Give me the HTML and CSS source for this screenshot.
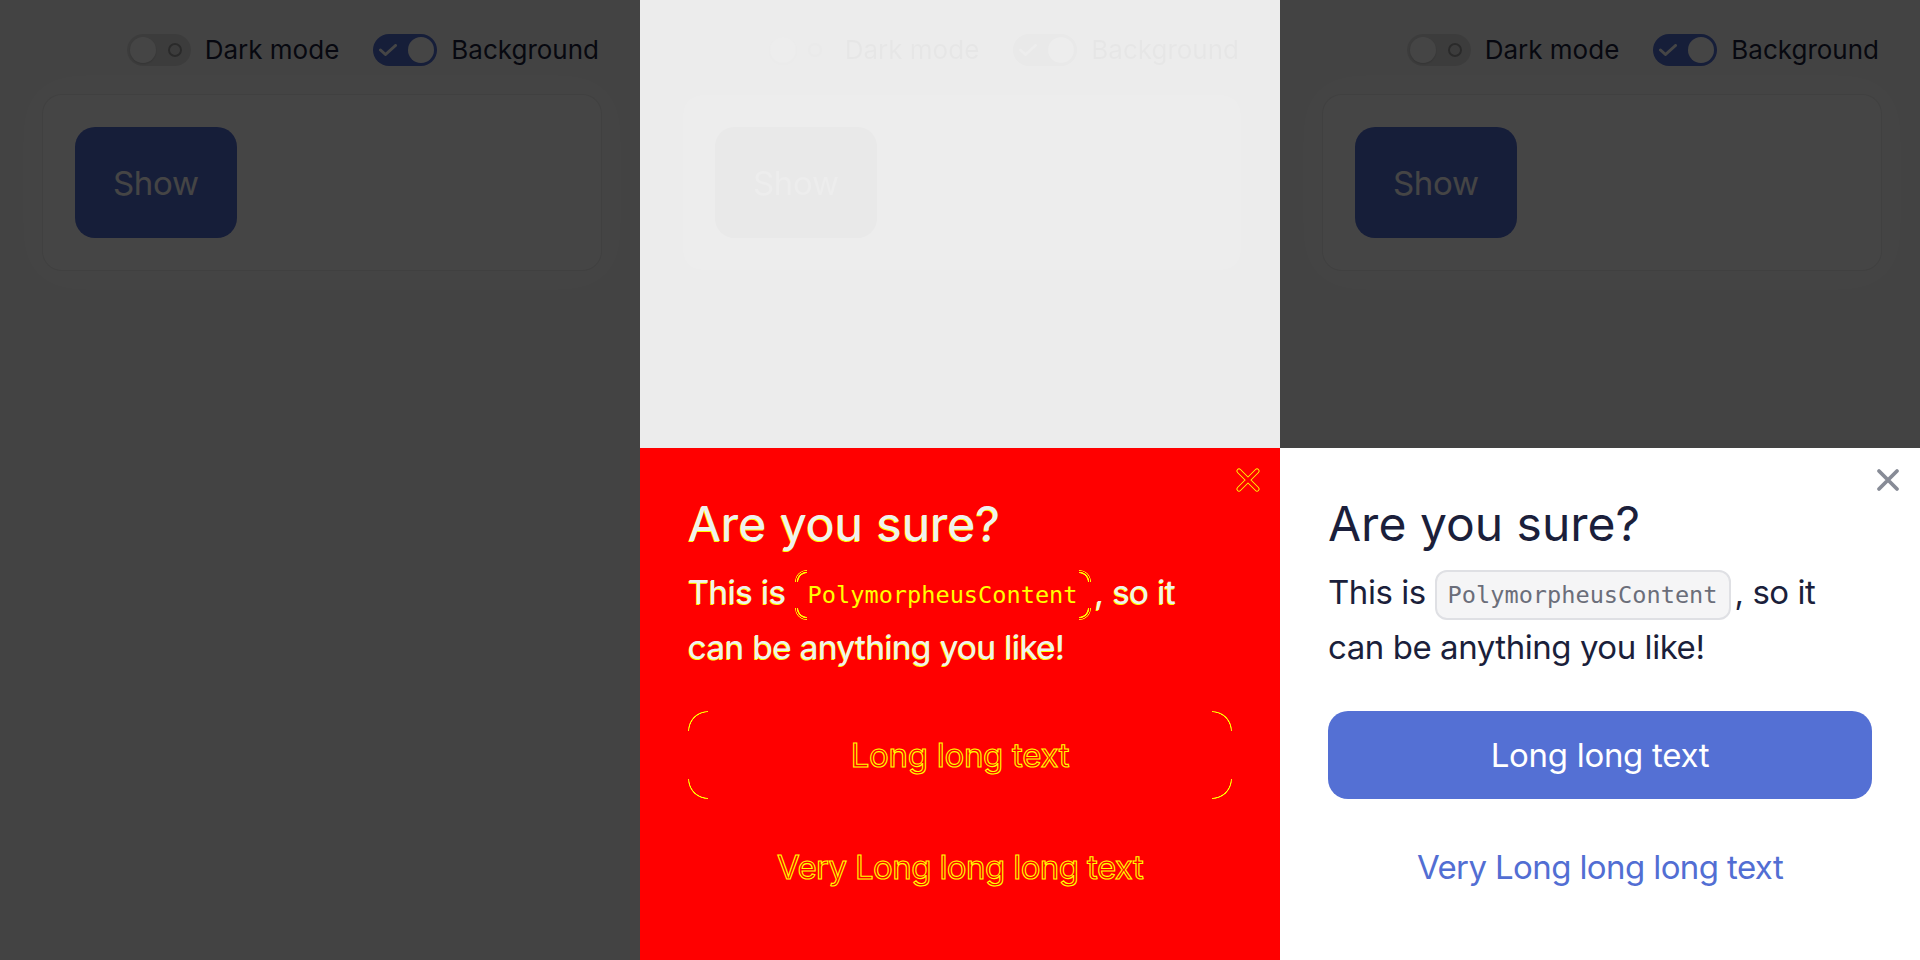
FILE: index.html
```html
<!DOCTYPE html>
<html lang="en">
<head>
<meta charset="utf-8">
<title>Dialog screenshot diff</title>
<link rel="stylesheet" href="styles.css">
</head>
<body>
<main class="panels">

  <!-- Expected -->
  <section class="panel">
    <div class="stage">
      <div class="page">
        <div class="toolbar">
          <div class="switch">
            <span class="toggle toggle--off"><span class="knob"></span><span class="ring"></span></span>
            <span class="switch-label">Dark mode</span>
          </div>
          <div class="switch">
            <span class="toggle toggle--on"><svg class="check" viewBox="0 0 18 12"><path d="M1.5 6L6.5 10.5L16.5 1.5"/></svg><span class="knob"></span></span>
            <span class="switch-label">Background</span>
          </div>
        </div>
        <div class="card"><button class="btn-show" type="button">Show</button></div>
      </div>
      <div class="scrim"></div>
    </div>
  </section>

  <!-- Diff -->
  <section class="panel panel--diff">
    <div class="stage">
      <div class="page">
        <div class="toolbar">
          <div class="switch">
            <span class="toggle toggle--off"><span class="knob"></span><span class="ring"></span></span>
            <span class="switch-label">Dark mode</span>
          </div>
          <div class="switch">
            <span class="toggle toggle--on"><svg class="check" viewBox="0 0 18 12"><path d="M1.5 6L6.5 10.5L16.5 1.5"/></svg><span class="knob"></span></span>
            <span class="switch-label">Background</span>
          </div>
        </div>
        <div class="card"><button class="btn-show" type="button">Show</button></div>
      </div>
      <div class="scrim"></div>
      <div class="fade"></div>
    </div>
    <div class="dialog dialog--diff">
      <button class="dialog-close" type="button" aria-label="Close"><svg viewBox="0 0 32 32"><path class="x-outer" d="M7 7L25 25M25 7L7 25"/><path class="x-inner" d="M7 7L25 25M25 7L7 25"/></svg></button>
      <h2 class="dialog-title">Are you sure?</h2>
      <p class="dialog-text">This is <code class="code">PolymorpheusContent</code>, so it can be anything you like!</p>
      <div class="actions">
        <button class="btn btn--primary" type="button">Long long text</button>
        <button class="btn btn--flat" type="button">Very Long long long text</button>
      </div>
    </div>
  </section>

  <!-- Actual -->
  <section class="panel">
    <div class="stage">
      <div class="page">
        <div class="toolbar">
          <div class="switch">
            <span class="toggle toggle--off"><span class="knob"></span><span class="ring"></span></span>
            <span class="switch-label">Dark mode</span>
          </div>
          <div class="switch">
            <span class="toggle toggle--on"><svg class="check" viewBox="0 0 18 12"><path d="M1.5 6L6.5 10.5L16.5 1.5"/></svg><span class="knob"></span></span>
            <span class="switch-label">Background</span>
          </div>
        </div>
        <div class="card"><button class="btn-show" type="button">Show</button></div>
      </div>
      <div class="scrim"></div>
    </div>
    <div class="dialog">
      <button class="dialog-close" type="button" aria-label="Close"><svg viewBox="0 0 32 32"><path class="x-outer" d="M7 7L25 25M25 7L7 25"/><path class="x-inner" d="M7 7L25 25M25 7L7 25"/></svg></button>
      <h2 class="dialog-title">Are you sure?</h2>
      <p class="dialog-text">This is <code class="code">PolymorpheusContent</code>, so it can be anything you like!</p>
      <div class="actions">
        <button class="btn btn--primary" type="button">Long long text</button>
        <button class="btn btn--flat" type="button">Very Long long long text</button>
      </div>
    </div>
  </section>

</main>
</body>
</html>
```

FILE: styles.css
```css
* {
  box-sizing: border-box;
  margin: 0;
  padding: 0;
}

html,
body {
  width: 1920px;
  height: 960px;
  overflow: hidden;
}

body {
  font-family: Inter, "Noto Sans", sans-serif;
  color: #1b1f3b;
  background: #434343;
}

button {
  font: inherit;
  border: 0;
  background: none;
  color: inherit;
}

.panels {
  display: grid;
  grid-template-columns: repeat(3, 640px);
  height: 960px;
}

.panel {
  display: grid;
  grid-template-rows: 960px;
  grid-template-columns: 640px;
  overflow: hidden;
}

.panel > * {
  grid-area: 1 / 1;
}

/* ---------- page under the modal ---------- */
.stage {
  display: grid;
  grid-template-rows: 100%;
  grid-template-columns: 100%;
}

.stage > * {
  grid-area: 1 / 1;
}

.page {
  background: #f7f7f7;
  padding: 34px 41px 0 42px;
}

.scrim {
  background: rgba(0, 0, 0, 0.73);
}

.toolbar {
  display: flex;
  justify-content: flex-end;
  align-items: center;
  gap: 34px;
  height: 32px;
}

.switch {
  display: flex;
  align-items: center;
  gap: 14px;
}

.switch-label {
  font-size: 26px;
  line-height: 32px;
  color: #1b1f3b;
}

.toggle {
  width: 64px;
  height: 32px;
  border-radius: 16px;
  display: flex;
  align-items: center;
  justify-content: space-between;
}

.toggle--off {
  background: #dedede;
  padding: 0 9px 0 3px;
}

.toggle--on {
  background: #526ed3;
  padding: 0 3px 0 6px;
}

.knob {
  width: 26px;
  height: 26px;
  border-radius: 50%;
  background: #fff;
}

.toggle--off .knob {
  box-shadow: 0 1px 2px rgba(0, 0, 0, 0.15);
}

.ring {
  width: 14px;
  height: 14px;
  border-radius: 50%;
  border: 2px solid #9a9a9a;
}

.check {
  width: 18px;
  height: 12px;
  fill: none;
  stroke: #fff;
  stroke-width: 3;
  stroke-linecap: round;
  stroke-linejoin: round;
}

.card {
  margin-top: 28px;
  margin-right: -3px;
  background: #fff;
  border: 1px solid rgba(0, 0, 0, 0.08);
  border-radius: 20px;
  padding: 32px;
  box-shadow: 0 0 40px 12px rgba(255, 255, 255, 0.6);
}

.btn-show {
  display: block;
  height: 111px;
  padding: 0 38px;
  border-radius: 20px;
  background: #526ed3;
  color: #fff;
  font-size: 33px;
  letter-spacing: -0.3px;
}

/* ---------- diff view ---------- */
.panel--diff .stage {
  filter: grayscale(1);
}

.fade {
  background: rgba(255, 255, 255, 0.9);
}

/* ---------- dialog ---------- */
.dialog {
  align-self: end;
  height: 512px;
  position: relative;
  background: #fff;
  padding: 48px;
}

.dialog-close {
  position: absolute;
  top: 16px;
  right: 16px;
  width: 32px;
  height: 32px;
  display: flex;
}

.dialog-close svg {
  width: 32px;
  height: 32px;
  fill: none;
  stroke-linecap: round;
}

.x-outer {
  stroke: #878b96;
  stroke-width: 3.8;
}

.x-inner {
  stroke: none;
}

.dialog-title {
  font-size: 48px;
  line-height: 56px;
  font-weight: 400;
  color: #1b1f3b;
}

.dialog-text {
  margin-top: 13px;
  font-size: 33px;
  line-height: 55px;
  letter-spacing: -0.45px;
  color: #1b1f3b;
}

.code {
  display: inline-block;
  font-family: "DejaVu Sans Mono", "Liberation Mono", monospace;
  font-size: 23.6px;
  line-height: 46px;
  letter-spacing: 0;
  padding: 0 11px;
  margin-right: 4px;
  border: 2px solid #dfe0e4;
  border-radius: 12px;
  background: #f5f5f6;
  color: #6b6e7a;
  vertical-align: 1px;
}

.actions {
  margin-top: 36px;
  display: flex;
  flex-direction: column;
  gap: 24px;
}

.btn {
  height: 88px;
  border-radius: 20px;
  font-size: 33px;
  letter-spacing: -0.3px;
  display: flex;
  align-items: center;
  justify-content: center;
}

.btn--primary {
  background: #5470d4;
  color: #fff;
}

.btn--flat {
  color: #526ed3;
  letter-spacing: -0.6px;
}

/* ---------- dialog, diff colouring ---------- */
.dialog--diff {
  background: #ff0000;
}

.dialog--diff .dialog-title,
.dialog--diff .dialog-text {
  color: #f0f0f0;
  text-shadow: -1px 1px 0 #ffff00;
}

.dialog--diff .code {
  color: #ffff00;
  text-shadow: none;
  border-color: transparent;
  background:
    radial-gradient(circle at 100% 100%, transparent 8.5px, #ff0 9px, #ff0 10px, transparent 10.5px, transparent 11px, #ff0 11.5px, #ff0 12px, transparent 12.5px) left top / 12px 12px no-repeat,
    radial-gradient(circle at 0 100%, transparent 8.5px, #ff0 9px, #ff0 10px, transparent 10.5px, transparent 11px, #ff0 11.5px, #ff0 12px, transparent 12.5px) right top / 12px 12px no-repeat,
    radial-gradient(circle at 100% 0, transparent 8.5px, #ff0 9px, #ff0 10px, transparent 10.5px, transparent 11px, #ff0 11.5px, #ff0 12px, transparent 12.5px) left bottom / 12px 12px no-repeat,
    radial-gradient(circle at 0 0, transparent 8.5px, #ff0 9px, #ff0 10px, transparent 10.5px, transparent 11px, #ff0 11.5px, #ff0 12px, transparent 12.5px) right bottom / 12px 12px no-repeat;
  background-origin: border-box;
}

.dialog--diff .btn {
  color: transparent;
  -webkit-text-stroke: 1.1px #ffff00;
}

.dialog--diff .btn--primary {
  background:
    radial-gradient(circle at 100% 100%, transparent 18.5px, #ff0 19px, #ff0 19.8px, transparent 20.3px) left top / 20px 20px no-repeat,
    radial-gradient(circle at 0 100%, transparent 18.5px, #ff0 19px, #ff0 19.8px, transparent 20.3px) right top / 20px 20px no-repeat,
    radial-gradient(circle at 100% 0, transparent 18.5px, #ff0 19px, #ff0 19.8px, transparent 20.3px) left bottom / 20px 20px no-repeat,
    radial-gradient(circle at 0 0, transparent 18.5px, #ff0 19px, #ff0 19.8px, transparent 20.3px) right bottom / 20px 20px no-repeat;
}

.dialog--diff .x-outer {
  stroke: #ffff00;
  stroke-width: 5.2;
}

.dialog--diff .x-inner {
  stroke: #ff0000;
  stroke-width: 3.2;
}
```
